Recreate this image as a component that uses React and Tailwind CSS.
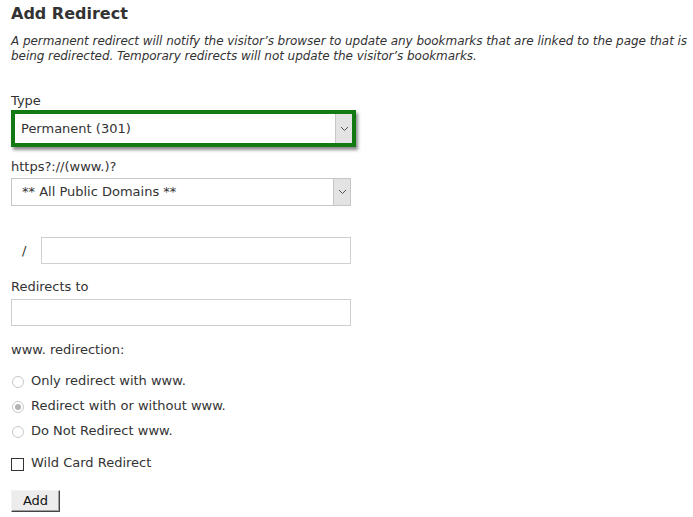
import React from "react";

const font = { fontFamily: '"DejaVu Sans", Verdana, sans-serif' };

const Chevron = () => (
  <svg width="9" height="6" viewBox="0 0 9 6" fill="none">
    <path d="M1 1l3.5 3.5L8 1" stroke="#555" strokeWidth="1" />
  </svg>
);

const SelectBox = ({ value, className = "" }) => (
  <div className={`flex items-stretch bg-white border border-[#c6c6c6] ${className}`}>
    <div className="flex-1 flex items-center pl-[10px] text-[13px] text-[#333]">{value}</div>
    <div className="w-[17px] flex items-center justify-center bg-[#e3e3e3] border-l border-[#c6c6c6]">
      <Chevron />
    </div>
  </div>
);

const Radio = ({ checked, label }) => (
  <label className="flex items-center h-[25px]">
    <span className="w-[12px] h-[12px] rounded-full border border-[#c8c8c8] bg-white flex items-center justify-center ml-[1px] mt-[3px]">
      {checked && <span className="w-[6px] h-[6px] rounded-full bg-[#b3b3b3]" />}
    </span>
    <span className="ml-[7px] text-[13px] text-[#333]">{label}</span>
  </label>
);

export default function App() {
  return (
    <div className="w-[693px] h-[517px] bg-white text-[#333] pl-[11px] pt-[2px]" style={font}>
      <h1 className="text-[16px] font-bold leading-[24px] text-[#333]">Add Redirect</h1>
      <p className="mt-[8px] text-[12px] italic leading-[15px] text-[#333] tracking-[-0.05px]">
        A permanent redirect will notify the visitor’s browser to update any bookmarks that are linked to the page that is being redirected. Temporary redirects will not update the visitor’s bookmarks.
      </p>

      <div className="mt-[29px] text-[13px] leading-[16px]">Type</div>
      <div className="mt-[1px] w-[345px] border-[4px] border-[#137a13] shadow-[2px_3px_3px_rgba(0,0,0,0.45)]">
        <SelectBox value="Permanent (301)" className="h-[29px] border-0 [&>div:first-child]:pl-[6px]" />
      </div>

      <div className="mt-[12px] text-[13px] leading-[16px]">https?://(www.)?</div>
      <SelectBox value="** All Public Domains **" className="mt-[3px] w-[340px] h-[28px]" />

      <div className="mt-[31px] flex items-center w-[340px]">
        <span className="w-[30px] pl-[11px] text-[13px]">/</span>
        <div className="flex-1 h-[27px] border border-[#cfcfcf] bg-white" />
      </div>

      <div className="mt-[15px] text-[13px] leading-[16px]">Redirects to</div>
      <div className="mt-[4px] w-[340px] h-[27px] border border-[#cfcfcf] bg-white" />

      <div className="mt-[16px] text-[13px] leading-[16px]">www. redirection:</div>
      <div className="mt-[10px]">
        <Radio label="Only redirect with www." />
        <Radio checked label="Redirect with or without www." />
        <Radio label="Do Not Redirect www." />
      </div>

      <label className="mt-[10px] flex items-center">
        <span className="w-[13px] h-[13px] border border-[#333] bg-white mt-[3px]" />
        <span className="ml-[7px] text-[13px]">Wild Card Redirect</span>
      </label>

      <button className="mt-[17px] w-[49px] h-[22px] bg-[#ececec] text-[13px] text-[#111] border border-t-[#f2f2f2] border-l-[#f2f2f2] border-r-[#444] border-b-[#444] shadow-[inset_-1px_-1px_0_#a0a0a0]">
        Add
      </button>
    </div>
  );
}
